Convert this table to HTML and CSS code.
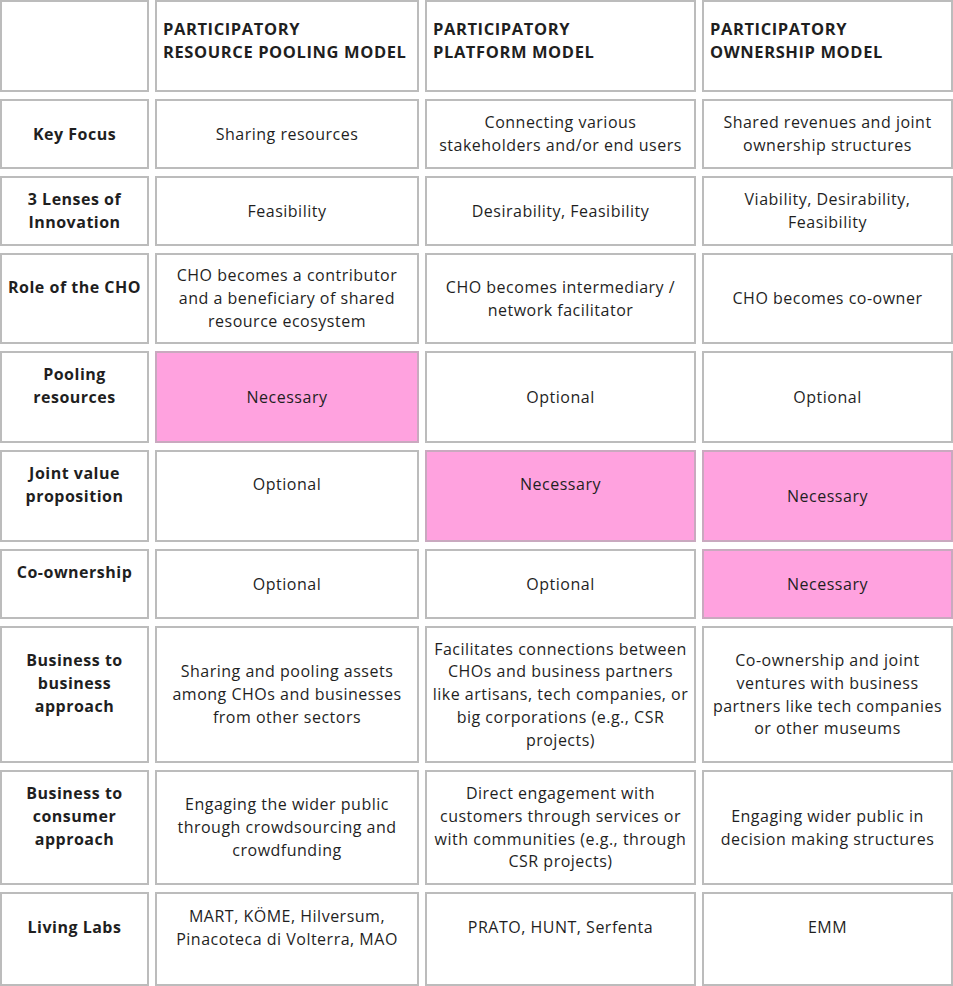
FILE: index.html
```html
<!DOCTYPE html>
<html lang="en">
<head>
<meta charset="utf-8">
<title>Participatory models</title>
<link rel="stylesheet" href="styles.css">
</head>
<body>
<div class="table">
  <div class="cell head"></div>
  <div class="cell head"><span>PARTICIPATORY<br>RESOURCE POOLING MODEL</span></div>
  <div class="cell head"><span>PARTICIPATORY<br>PLATFORM MODEL</span></div>
  <div class="cell head"><span>PARTICIPATORY<br>OWNERSHIP MODEL</span></div>

  <div class="cell label"><span>Key Focus</span></div>
  <div class="cell"><span>Sharing resources</span></div>
  <div class="cell"><span>Connecting various<br>stakeholders and/or end users</span></div>
  <div class="cell"><span>Shared revenues and joint<br>ownership structures</span></div>

  <div class="cell label"><span>3 Lenses of<br>Innovation</span></div>
  <div class="cell"><span>Feasibility</span></div>
  <div class="cell"><span>Desirability, Feasibility</span></div>
  <div class="cell"><span>Viability, Desirability,<br>Feasibility</span></div>

  <div class="cell label"><span class="lift">Role of the CHO</span></div>
  <div class="cell"><span>CHO becomes a contributor<br>and a beneficiary of shared<br>resource ecosystem</span></div>
  <div class="cell"><span>CHO becomes intermediary /<br>network facilitator</span></div>
  <div class="cell"><span>CHO becomes co-owner</span></div>

  <div class="cell label"><span class="lift">Pooling<br>resources</span></div>
  <div class="cell pink"><span>Necessary</span></div>
  <div class="cell"><span>Optional</span></div>
  <div class="cell"><span>Optional</span></div>

  <div class="cell label"><span class="lift">Joint value<br>proposition</span></div>
  <div class="cell"><span class="lift">Optional</span></div>
  <div class="cell pink"><span class="lift">Necessary</span></div>
  <div class="cell pink"><span>Necessary</span></div>

  <div class="cell label"><span class="lift">Co-ownership</span></div>
  <div class="cell"><span>Optional</span></div>
  <div class="cell"><span>Optional</span></div>
  <div class="cell pink"><span>Necessary</span></div>

  <div class="cell label"><span class="lift">Business to<br>business<br>approach</span></div>
  <div class="cell"><span>Sharing and pooling assets<br>among CHOs and businesses<br>from other sectors</span></div>
  <div class="cell"><span>Facilitates connections between<br>CHOs and business partners<br>like artisans, tech companies, or<br>big corporations (e.g., CSR<br>projects)</span></div>
  <div class="cell"><span>Co-ownership and joint<br>ventures with business<br>partners like tech companies<br>or other museums</span></div>

  <div class="cell label"><span class="lift">Business to<br>consumer<br>approach</span></div>
  <div class="cell"><span>Engaging the wider public<br>through crowdsourcing and<br>crowdfunding</span></div>
  <div class="cell"><span>Direct engagement with<br>customers through services or<br>with communities (e.g., through<br>CSR projects)</span></div>
  <div class="cell"><span>Engaging wider public in<br>decision making structures</span></div>

  <div class="cell label"><span class="lift">Living Labs</span></div>
  <div class="cell"><span class="lift">MART, KÖME, Hilversum,<br>Pinacoteca di Volterra, MAO</span></div>
  <div class="cell"><span class="lift">PRATO, HUNT, Serfenta</span></div>
  <div class="cell"><span class="lift">EMM</span></div>
</div>
</body>
</html>
```

FILE: styles.css
```css
html, body {
  margin: 0;
  padding: 0;
  background: #ffffff;
}

body {
  font-family: "Open Sans", "Liberation Sans", sans-serif;
  font-size: 16px;
  color: #1f1f1f;
  width: 953px;
}

.table {
  display: grid;
  grid-template-columns: 149px 264px 271px 251px;
  grid-template-rows: 92px 70px 70px 91px 92px 92px 70px 137px 115px 94px;
  column-gap: 6px;
  row-gap: 7px;
}

.cell {
  box-sizing: border-box;
  border: 2px solid #bcbcbc;
  background: #ffffff;
  display: flex;
  align-items: center;
  justify-content: center;
  text-align: center;
  padding: 0 2px;
  line-height: 22.7px;
  letter-spacing: 0.5px;
  white-space: nowrap;
}

.cell.head {
  align-items: flex-start;
  justify-content: flex-start;
  text-align: left;
  padding: 16px 6px 0;
  font-size: 16.5px;
  font-weight: 700;
  letter-spacing: 0.6px;
}

.cell.label {
  font-weight: 700;
  letter-spacing: 0.5px;
}

.cell.pink {
  background: #ffa2df;
  border-color: #c9a9bf;
}

.lift {
  padding-bottom: 22.7px;
}
```
